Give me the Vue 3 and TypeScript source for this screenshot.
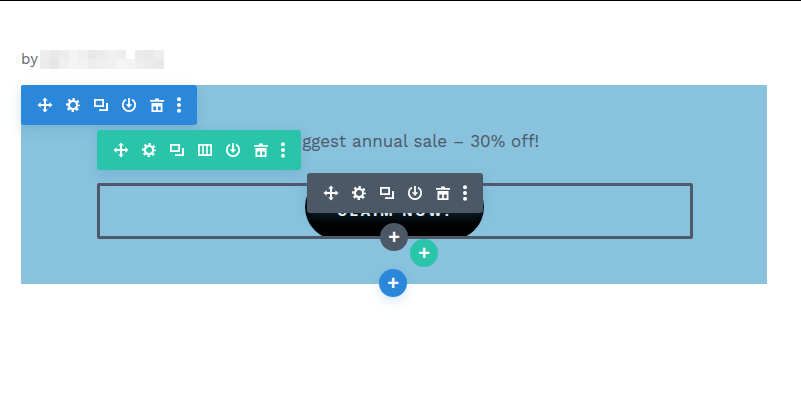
<script setup lang="ts">
import { computed } from 'vue'

type Tool = 'move' | 'gear' | 'clone' | 'cols' | 'save' | 'trash' | 'more'

const sectionTools: Tool[] = ['move', 'gear', 'clone', 'save', 'trash', 'more']
const rowTools: Tool[] = ['move', 'gear', 'clone', 'cols', 'save', 'trash', 'more']

// blurred author name
const shades = [
  '#eeeeee', '#e9e9e9', '#ededed', '#f3f3f3', '#efefef', '#e8e8e8', '#ececec', '#f0f0f0', '#eeeeee', '#ffffff', '#ebebeb', '#e9e9e9', '#eeeeee',
  '#ececec', '#e6e6e6', '#f0f0f0', '#f4f4f4', '#f2f2f2', '#ededed', '#efefef', '#f1f1f1', '#f5f5f5', '#f3f3f3', '#eeeeee', '#ebebeb', '#e8e8e8',
]
const cells = computed(() => shades.map((c) => ({ background: c })))
</script>

<template>
  <div class="page">
    <p class="byline">
      <span>by</span>
      <span class="blur"><i v-for="(c, i) in cells" :key="i" :style="c"></i></span>
    </p>

    <section class="section">
      <p class="lead">The biggest annual sale – 30% off!</p>
      <div class="row">
        <a class="cta">CLAIM NOW!</a>
      </div>

      <div class="bar bar-blue">
        <svg v-for="t in sectionTools" :key="t" class="ico" :class="{ dots: t === 'more' }" :viewBox="t === 'more' ? '6 0 4 16' : '0 0 16 16'">
          <use :href="'#i-' + t" />
        </svg>
      </div>
      <div class="bar bar-green">
        <svg v-for="t in rowTools" :key="t" class="ico" :class="{ dots: t === 'more' }" :viewBox="t === 'more' ? '6 0 4 16' : '0 0 16 16'">
          <use :href="'#i-' + t" />
        </svg>
      </div>
      <div class="bar bar-gray">
        <svg v-for="t in sectionTools" :key="t" class="ico" :class="{ dots: t === 'more' }" :viewBox="t === 'more' ? '6 0 4 16' : '0 0 16 16'">
          <use :href="'#i-' + t" />
        </svg>
      </div>

      <span class="add add-gray">+</span>
      <span class="add add-green">+</span>
      <span class="add add-blue">+</span>
    </section>

    <svg class="defs" width="0" height="0">
      <defs>
        <g id="i-move">
          <path fill="none" stroke="#fff" stroke-width="2" d="M8 3v10M3 8h10" />
          <path fill="#fff" d="M8 .5l2.800 3.100H5.200zM8 15.500l-2.800-3.100h5.600zM.5 8l3.100-2.800v5.600zM15.500 8l-3.100 2.800V5.200z" />
        </g>
        <g id="i-gear" fill="none" stroke="#fff">
          <circle cx="8" cy="8" r="4.100" stroke-width="2.200" />
          <circle cx="8" cy="8" r="6" stroke-width="2" stroke-dasharray="2.400 2.312" stroke-dashoffset="1.200" />
        </g>
        <path id="i-clone" fill="#fff" fill-rule="evenodd" d="M1 2h10v8H1zm1.800 1.800v4.400h6.400V3.800zM13 6h2v8H6v-1.800h7z" />
        <path id="i-cols" fill="#fff" fill-rule="evenodd" d="M1 2h14v12H1zm1.800 1.800v8.400h2.400V3.800zm4 0v8.400h2.400V3.800zm4 0v8.400h2.400V3.800z" />
        <g id="i-save">
          <path fill="none" stroke="#fff" stroke-width="1.700" d="M5 2.500a6.200 6.200 0 106 0" />
          <path fill="#fff" d="M7.100 1h1.800v6.200h2.300L8 11 4.800 7.200h2.300z" />
        </g>
        <path id="i-trash" fill="#fff" fill-rule="evenodd" d="M6 1.500h4v1.500h5v1.800H1V3h5zM2.500 6h11v9h-11zm1.800 3.500v3.700h2.800V9.500zm4.600 0v3.700h2.800V9.500z" />
        <g id="i-more" fill="#fff">
          <circle cx="8" cy="2.200" r="2" />
          <circle cx="8" cy="8" r="2" />
          <circle cx="8" cy="13.800" r="2" />
        </g>
      </defs>
    </svg>
  </div>
</template>

<style scoped>
.page {
  box-sizing: border-box;
  height: 413px;
  border-top: 1px solid #000;
  padding: 48px 34px 0 21px;
  overflow: hidden;
  background: #fff;
  font-family: "Work Sans", "Inter", "Open Sans", sans-serif;
}
.byline {
  display: flex;
  align-items: center;
  gap: 2px;
  height: 20px;
  margin: 0 0 16px;
  font-size: 15px;
  color: #666a70;
}
.blur {
  display: grid;
  grid-template-columns: repeat(13, 1fr);
  grid-template-rows: repeat(2, 1fr);
  width: 124px;
  height: 19px;
}
.section {
  box-sizing: border-box;
  position: relative;
  height: 199px;
  padding: 43px 74px 0 76px;
  background: #89c2dc;
}
.lead {
  margin: 0 0 29px;
  height: 26px;
  line-height: 26px;
  font-size: 17px;
  letter-spacing: 0.03px;
  text-align: center;
  color: #4b5869;
}
.row {
  display: flex;
  justify-content: center;
  height: 56px;
  border: 3px solid #4e5a6a;
  border-radius: 2px;
  box-sizing: border-box;
  overflow: hidden;
}
.cta {
  display: flex;
  align-items: center;
  justify-content: center;
  flex: none;
  width: 179px;
  height: 66px;
  margin: -12px 1px 0 0;
  border-radius: 33px;
  background: #000;
  color: #fff;
  font-size: 14px;
  font-weight: 700;
  letter-spacing: 2.700px;
  padding-top: 8px;
  box-sizing: border-box;
}
.bar {
  position: absolute;
  display: flex;
  align-items: center;
  height: 40px;
  padding-left: 16px;
  gap: 12px;
  border-radius: 3px;
  box-sizing: border-box;
  box-shadow: 0 4px 12px rgba(60, 130, 180, 0.25);
}
.bar-blue {
  left: 0;
  top: 0;
  width: 176px;
  background: #2b87da;
}
.bar-green {
  left: 76px;
  top: 45px;
  width: 204px;
  background: #29c4a9;
}
.bar-gray {
  left: 286px;
  top: 88px;
  width: 176px;
  background: #4c5866;
}
.ico {
  flex: none;
  width: 16px;
  height: 16px;
}
.ico.dots {
  width: 4px;
}
.add {
  position: absolute;
  display: flex;
  align-items: center;
  justify-content: center;
  width: 28px;
  height: 28px;
  border-radius: 50%;
  color: #fff;
  font: 700 20px/1 "Liberation Sans", sans-serif;
}
.add-gray {
  left: 359px;
  top: 138px;
  background: #4c5866;
}
.add-green {
  left: 389px;
  top: 154px;
  background: #29c4a9;
}
.add-blue {
  left: 358px;
  top: 184px;
  background: #2b87da;
  box-shadow: 0 4px 12px rgba(43, 135, 218, 0.2);
}
.defs {
  position: absolute;
}
</style>
